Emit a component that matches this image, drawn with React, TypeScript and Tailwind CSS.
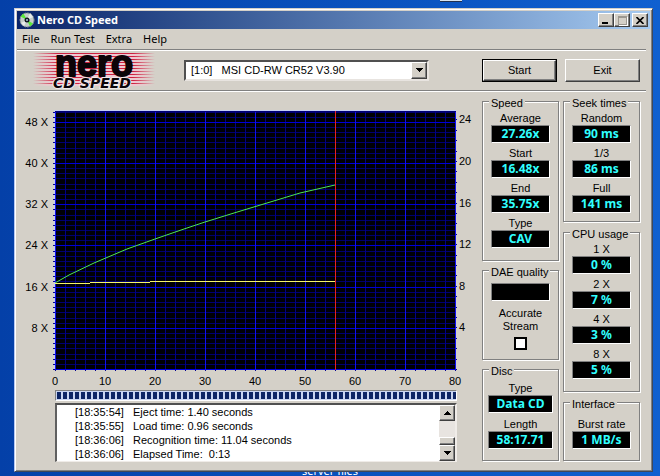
import React from "react";

type Reading = { label: string; value: string };

const speed: Reading[] = [
  { label: "Average", value: "27.26x" },
  { label: "Start", value: "16.48x" },
  { label: "End", value: "35.75x" },
  { label: "Type", value: "CAV" },
];
const seek: Reading[] = [
  { label: "Random", value: "90 ms" },
  { label: "1/3", value: "86 ms" },
  { label: "Full", value: "141 ms" },
];
const cpu: Reading[] = [
  { label: "1 X", value: "0 %" },
  { label: "2 X", value: "7 %" },
  { label: "4 X", value: "3 %" },
  { label: "8 X", value: "5 %" },
];
const log = [
  ["[18:35:54]", "Eject time: 1.40 seconds"],
  ["[18:35:55]", "Load time: 0.96 seconds"],
  ["[18:36:06]", "Recognition time: 11.04 seconds"],
  ["[18:36:06]", "Elapsed Time:\u00a0 0:13"],
];

const raised =
  "border border-t-white border-l-white border-r-[#404040] border-b-[#404040] bg-[#d4d0c8] shadow-[inset_-1px_-1px_0_#808080]";

function Group({ title, className, children }: { title: string; className: string; children: React.ReactNode }) {
  return (
    <fieldset
      className={
        "min-w-0 border border-[#808080] shadow-[1px_1px_0_#fff,inset_1px_1px_0_#fff] flex flex-col items-center " +
        className
      }
    >
      <legend className="ml-1.5 bg-[#d4d0c8] px-0.5 pt-1 leading-3 whitespace-nowrap">{title}</legend>
      {children}
    </fieldset>
  );
}

function Display({ id, value, wide }: { id: string; value: string; wide?: boolean }) {
  return (
    <output
      id={id}
      className={
        "block h-[18px] border border-t-[#808080] border-l-[#808080] border-r-white border-b-white bg-black text-center font-['Noto_Sans',sans-serif] text-[12px] leading-4 font-bold whitespace-nowrap text-[#30ffff] " +
        (wide ? "w-[65px]" : "w-[59px]")
      }
    >
      {value}
    </output>
  );
}

function Readings({ group, items, wide }: { group: string; items: Reading[]; wide?: boolean }) {
  return (
    <>
      {items.map((r, i) => (
        <div key={r.label} className="flex flex-col items-center">
          <label htmlFor={group + i} className="leading-[14px] whitespace-nowrap">
            {r.label}
          </label>
          <Display id={group + i} value={r.value} wide={wide} />
        </div>
      ))}
    </>
  );
}

function Chart() {
  const left = 38;
  const top = 18;
  const bottom = 276;
  const yOf = (x: number) => Math.round(bottom - x * 5.15);
  const rows = Array.from({ length: 50 }, (_, i) => i + 1);
  const cols = Array.from({ length: 41 }, (_, i) => i);
  const right = Array.from({ length: 25 }, (_, i) => i);
  const across = (r: number) => `M${left} ${yOf(r) + 0.5}h401`;
  const down = (c: number) => `M${left + c * 10 + 0.5} ${top}v259`;
  return (
    <svg viewBox="0 0 460 295" className="block w-full shrink-0" role="img" aria-label="Transfer rate">
      <rect x={left} y={top} width="401" height="259" fill="#000004" />
      <g fill="none" strokeWidth="1">
        <path stroke="#00006c" d={rows.filter((r) => r % 8).map(across).join("")} />
        <path stroke="#000088" d={cols.filter((c) => c % 5).map(down).join("")} />
        <path stroke="#0000d8" d={[0, ...rows].filter((r) => r % 8 === 0).map(across).join("")} />
        <path stroke="#1010f0" d={cols.filter((c) => c % 5 === 0).map(down).join("")} />
        <path stroke="#000078" d={`M${left} ${top + 0.5}h401`} />
        <path stroke="#c4ccf4" d={`M${left - 0.5} ${bottom + 1}V${top - 0.5}h402`} />
        <path
          stroke="#000090"
          d={
            [0, ...rows].map((r) => `M${left - 2} ${yOf(r) + 0.5}h2`).join("") +
            cols.map((c) => `M${left + c * 10 + 0.5} ${bottom + 1}v1`).join("") +
            right.map((r) => `M${left + 401} ${Math.round(bottom - r * 10.4) + 0.5}h1`).join("")
          }
        />
        <path
          stroke="#50e850"
          d="M38 190 52 182 77 170 110 156 124 151 138 146 167 136 188 129 217 120 250 110 283 100 318 92"
        />
        <path stroke="#f4f468" d="M38 190.5H73M73 189.5H133M133 188.5H318" />
        <path stroke="#e82020" d={`M318.5 ${top}v259`} />
      </g>
      <g fill="#000" fontSize="11">
        {[8, 16, 24, 32, 40, 48].map((v) => (
          <text key={v} x="31" y={yOf(v) + 4} textAnchor="end">
            {v + " X"}
          </text>
        ))}
        {[4, 8, 12, 16, 20, 24].map((v) => (
          <text key={v} x="442" y={Math.round(bottom - v * 10.4) + 4}>
            {v}
          </text>
        ))}
        {[0, 10, 20, 30, 40, 50, 60, 70, 80].map((v) => (
          <text key={v} x={left + v * 5} y="292" textAnchor="middle">
            {v}
          </text>
        ))}
      </g>
    </svg>
  );
}

function Logo() {
  return (
    <svg width="122" height="36" viewBox="0 0 122 36" className="shrink-0 overflow-visible" role="img" aria-label="Nero CD Speed">
      <defs>
        <linearGradient id="fade" gradientUnits="userSpaceOnUse" x1="0" y1="0" x2="122" y2="0">
          <stop offset="0" stopColor="#cc2040" stopOpacity="0" />
          <stop offset="0.2" stopColor="#cc2040" />
          <stop offset="0.82" stopColor="#cc2040" />
          <stop offset="1" stopColor="#cc2040" stopOpacity="0" />
        </linearGradient>
        <linearGradient id="fadeWhite" gradientUnits="userSpaceOnUse" x1="0" y1="0" x2="122" y2="0">
          <stop offset="0" stopColor="#f0c8d0" stopOpacity="0" />
          <stop offset="0.2" stopColor="#f0c8d0" />
          <stop offset="0.82" stopColor="#f0c8d0" />
          <stop offset="1" stopColor="#f0c8d0" stopOpacity="0" />
        </linearGradient>
      </defs>
      <rect x="0" y="1" width="122" height="33" fill="url(#fadeWhite)" />
      {Array.from({ length: 11 }, (_, i) => (
        <rect key={i} x="0" y={1 + i * 3} width="122" height="1" fill="url(#fade)" />
      ))}
      <text
        x="61"
        y="24"
        textAnchor="middle"
        fontFamily="'Liberation Sans', sans-serif"
        fontWeight="bold"
        fontSize="36"
        fill="#0c0408"
        stroke="#0c0408"
        strokeWidth="2"
        strokeLinejoin="round"
      >
        nero
      </text>
      <text
        x="59"
        y="36"
        textAnchor="middle"
        fontFamily="'DejaVu Sans', sans-serif"
        fontWeight="bold"
        fontStyle="italic"
        fontSize="14"
        fill="#0c0408"
        stroke="#f0e8e8"
        strokeWidth="2"
        paintOrder="stroke"
      >
        CD SPEED
      </text>
    </svg>
  );
}

function Arrow({ up }: { up?: boolean }) {
  return (
    <svg width="7" height="4" viewBox="0 0 7 4" shapeRendering="crispEdges" aria-hidden="true">
      <path d={up ? "M3 0h1v1h1v1h1v1h1v1H0V3h1V2h1V1h1z" : "M0 0h7v1H6v1H5v1H4v1H3V3H2V2H1V1H0z"} />
    </svg>
  );
}

export default function App() {
  return (
    <div className="relative isolate min-h-screen overflow-hidden bg-linear-to-r from-[#0440a8] to-[#1060d0] pt-2 pr-[7px] pb-[5px] pl-3.5 font-['Liberation_Sans',Arial,sans-serif] text-[11px] text-black">
      <div className="absolute top-0 left-2/3 h-0.5 w-[22px] border-b border-[#203050] bg-[#d8e4f0]" />
      <div className="absolute right-0 bottom-0 left-0 -z-10 text-center font-['Noto_Sans',sans-serif] text-[11px] leading-3 text-white">
        server files
      </div>
      <div className="border border-t-[#d4d0c8] border-l-[#b8c8f0] border-r-[#404858] border-b-[#404858] bg-[#d4d0c8] p-0.5 shadow-[inset_1px_1px_0_#fff,inset_-1px_-1px_0_#808080]">
        <header className="flex h-[18px] items-center bg-linear-to-r from-[#0a246a] to-[#a6caf0] px-0.5">
          <svg width="16" height="16" viewBox="0 0 16 16" aria-hidden="true">
            <circle cx="8" cy="8" r="7" fill="#c4ccc8" stroke="#8c9898" strokeDasharray="2 1" />
            <path d="M8 8 1.500 4.500 4.500 1.500zM8 8l6 3.500L11 14.500z" fill="#58e838" />
            <path d="M8 8 11 1l3 4zM8 8 2 11l3 3z" fill="#e8ecec" />
            <circle cx="8" cy="8" r="2.500" fill="#101820" />
            <circle cx="8" cy="8" r="1" fill="#a8c8d8" />
          </svg>
          <h1 className="ml-0.5 flex-1 font-['Noto_Sans',sans-serif] text-[11px] leading-4 font-bold text-white">
            Nero CD Speed
          </h1>
          <button type="button" aria-label="Minimize" className={"flex h-3.5 w-4 items-end pb-0.5 pl-[3px] " + raised}>
            <span className="h-0.5 w-1.5 bg-black" />
          </button>
          <button type="button" aria-label="Maximize" disabled className={"flex h-3.5 w-4 items-center justify-center " + raised}>
            <span className="h-[9px] w-[9px] border border-t-2 border-[#9c9890] shadow-[1px_1px_0_#fff]" />
          </button>
          <button type="button" aria-label="Close" className={"ml-0.5 flex h-3.5 w-4 items-center justify-center " + raised}>
            <svg width="8" height="7" viewBox="0 0 8 7" aria-hidden="true">
              <path d="M.5 0 7.500 7M7.500 0 .5 7" stroke="#000" strokeWidth="1.600" />
            </svg>
          </button>
        </header>

        <nav className="flex h-5 items-center gap-[11px] px-[5px] font-['Noto_Sans',sans-serif] text-[11px] leading-4">
          {["File", "Run Test", "Extra", "Help"].map((m) => (
            <button key={m} type="button">
              {m}
            </button>
          ))}
        </nav>

        <div className="mr-1 flex h-[42px] items-center border-t border-b border-[#808080] pr-1.5 pl-4 shadow-[0_1px_0_#fff,inset_0_1px_0_#fff]">
          <Logo />
          <div className="relative ml-[29px] w-[245px]">
            <select
              aria-label="Drive"
              className="block h-[21px] w-full appearance-none border-2 border-t-[#505050] border-l-[#505050] border-r-[#e8e4e0] border-b-[#e8e4e0] bg-white pl-[5px] text-[11px] leading-4"
            >
              <option>{"[1:0]\u00a0\u00a0 MSI CD-RW CR52 V3.90"}</option>
            </select>
            <span
              className={"pointer-events-none absolute top-0.5 right-0.5 flex h-[17px] w-4 items-center justify-center " + raised}
            >
              <Arrow />
            </span>
          </div>
          <div className="ml-auto flex gap-2">
            <span className="flex border border-black">
              <button type="button" className={"h-[21px] w-[73px] leading-4 " + raised}>
                Start
              </button>
            </span>
            <button type="button" className={"h-[23px] w-[75px] leading-4 " + raised}>
              Exit
            </button>
          </div>
        </div>

        <main className="flex items-stretch pt-0.5 pr-2.5 pb-[7px]">
          <section className="flex min-w-0 flex-1 flex-col pr-[5px]">
            <Chart />
            <div className="mt-0.5 mr-5 ml-[38px] border border-t-[#808080] border-l-[#808080] border-r-white border-b-white bg-[#c8d4f0] py-px pl-px">
              <div
                role="progressbar"
                aria-label="Test progress"
                aria-valuenow={100}
                className="h-[7px] bg-[repeating-linear-gradient(90deg,#0c2464_0_4px,#c8d4f0_4px_6px)]"
              />
            </div>
            <div className="mt-0.5 mr-5 ml-[38px] flex flex-1 border-2 border-t-[#505050] border-l-[#606060] border-r-[#f0ece8] border-b border-b-[#f0ece8] bg-white">
              <ul className="flex-1 pl-[18px] leading-[14px] whitespace-nowrap">
                {log.map(([time, text]) => (
                  <li key={time + text} className="flex">
                    <span className="w-[58px]">{time}</span>
                    <span>{text}</span>
                  </li>
                ))}
              </ul>
              <div className="flex w-4 flex-col bg-[#e8e4e0]">
                <button type="button" aria-label="Scroll up" className={"flex h-4 items-center justify-center " + raised}>
                  <Arrow up />
                </button>
                <div className="flex-1" />
                <div className={"h-2 " + raised} />
                <button type="button" aria-label="Scroll down" className={"flex h-4 items-center justify-center " + raised}>
                  <Arrow />
                </button>
              </div>
            </div>
          </section>

          <aside className="flex gap-1">
            <div className="flex w-[77px] flex-col gap-px">
              <Group title="Speed" className="gap-[3px] pt-0.5 pb-3">
                <Readings group="speed" items={speed} />
              </Group>
              <Group title="DAE quality" className="pt-[5px] pb-[9px]">
                <Display id="dae" value="" />
                <label className="mt-1.5 flex flex-col items-center gap-1 text-center leading-[13px]">
                  <span className="w-[60px]">Accurate Stream</span>
                  <input type="checkbox" className="h-[13px] w-[13px] appearance-none border-2 border-black bg-white" />
                </label>
              </Group>
              <Group title="Disc" className="gap-1 pt-1 pb-[11px]">
                <Readings
                  group="disc"
                  wide
                  items={[
                    { label: "Type", value: "Data CD" },
                    { label: "Length", value: "58:17.71" },
                  ]}
                />
              </Group>
            </div>
            <div className="flex w-[77px] flex-col gap-0.5">
              <Group title="Seek times" className="gap-[3px] pt-0.5 pb-2">
                <Readings group="seek" items={seek} />
              </Group>
              <Group title="CPU usage" className="gap-[3px] pt-0.5 pb-3">
                <Readings group="cpu" items={cpu} />
              </Group>
              <Group title="Interface" className="pt-[7px] pb-[11px]">
                <Readings group="interface" items={[{ label: "Burst rate", value: "1 MB/s" }]} />
              </Group>
            </div>
          </aside>
        </main>
      </div>
    </div>
  );
}
